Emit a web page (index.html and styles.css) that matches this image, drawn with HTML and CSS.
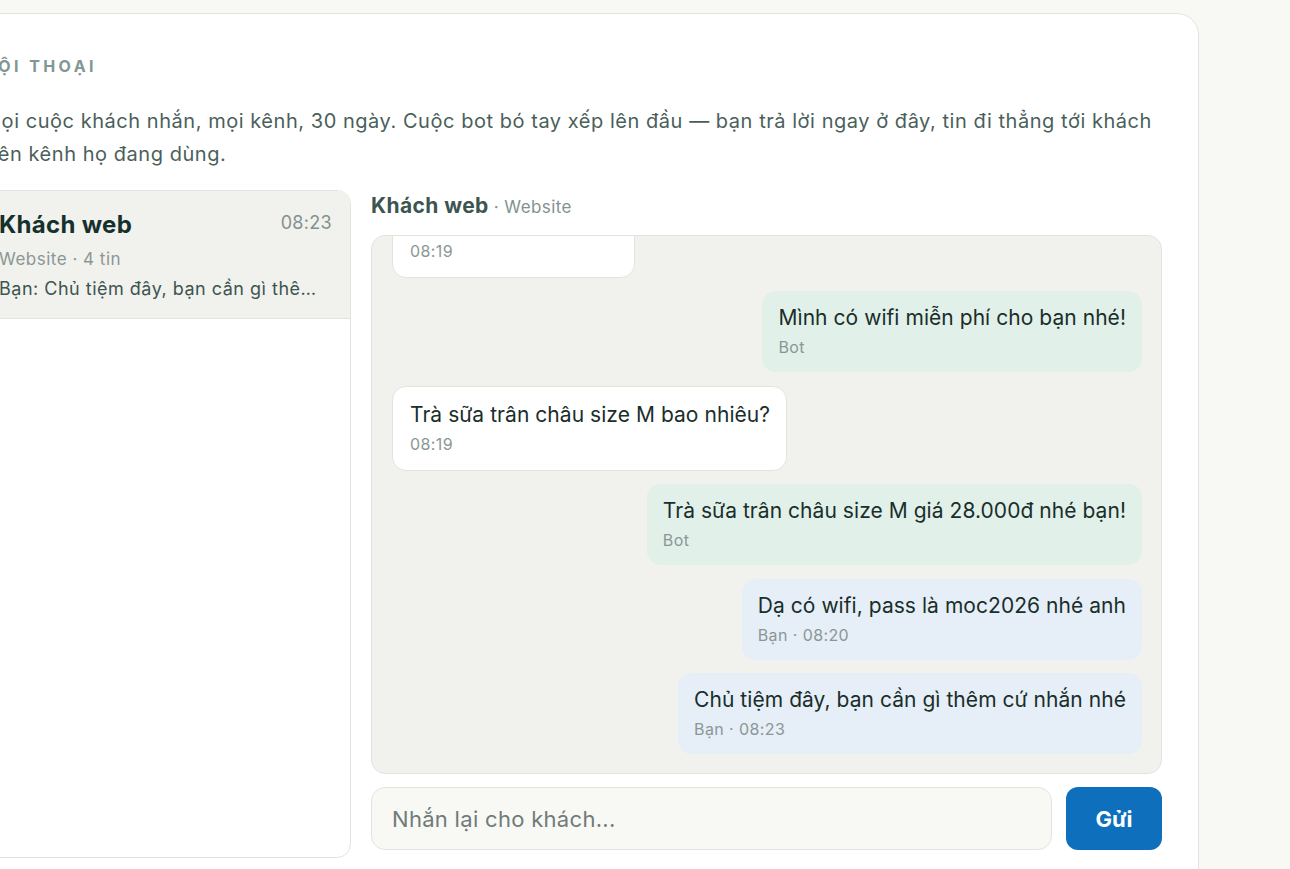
FILE: index.html
```html
<!DOCTYPE html>
<html lang="vi">
<head>
<meta charset="utf-8">
<title>Hội thoại</title>
<link rel="stylesheet" href="styles.css">
</head>
<body>
<main class="card">
  <h2 class="eyebrow">HỘI THOẠI</h2>
  <p class="intro">Mọi cuộc khách nhắn, mọi kênh, 30 ngày. Cuộc bot bó tay xếp lên đầu — bạn trả lời ngay ở đây, tin đi thẳng tới khách trên kênh họ đang dùng.</p>
  <div class="inbox">
    <aside class="thread-list">
      <div class="thread active">
        <div class="thread-top">
          <span class="thread-name">Khách web</span>
          <span class="thread-time">08:23</span>
        </div>
        <div class="thread-meta">Website · 4 tin</div>
        <div class="thread-preview">Bạn: Chủ tiệm đây, bạn cần gì thêm cứ nhắn nhé</div>
      </div>
    </aside>
    <section class="chat">
      <div class="chat-head"><span class="chat-name">Khách web</span><span class="chat-channel"> · Website</span></div>
      <div class="messages">
        <div class="msg in"><div class="msg-text">Chào quán ạ</div><div class="msg-meta">08:18</div></div>
        <div class="msg bot"><div class="msg-text">Chào bạn! Mình có thể giúp gì?</div><div class="msg-meta">Bot</div></div>
        <div class="msg in"><div class="msg-text">Bên mình có wifi chứ</div><div class="msg-meta">08:19</div></div>
        <div class="msg bot"><div class="msg-text">Mình có wifi miễn phí cho bạn nhé!</div><div class="msg-meta">Bot</div></div>
        <div class="msg in"><div class="msg-text">Trà sữa trân châu size M bao nhiêu?</div><div class="msg-meta">08:19</div></div>
        <div class="msg bot"><div class="msg-text">Trà sữa trân châu size M giá 28.000đ nhé bạn!</div><div class="msg-meta">Bot</div></div>
        <div class="msg me"><div class="msg-text">Dạ có wifi, pass là moc2026 nhé anh</div><div class="msg-meta">Bạn · 08:20</div></div>
        <div class="msg me"><div class="msg-text">Chủ tiệm đây, bạn cần gì thêm cứ nhắn nhé</div><div class="msg-meta">Bạn · 08:23</div></div>
      </div>
      <form class="composer">
        <input class="composer-input" type="text" placeholder="Nhắn lại cho khách...">
        <button class="composer-send" type="button">Gửi</button>
      </form>
    </section>
  </div>
</main>
</body>
</html>
```

FILE: styles.css
```css
* { box-sizing: border-box; }

html, body {
  margin: 0;
  padding: 0;
  background: #f8f8f5;
  overflow: hidden;
}

body {
  font-family: Inter, "Noto Sans", "Liberation Sans", sans-serif;
  color: #1a2e2a;
}

.card {
  width: 1253px;
  margin: 13px 0 0 -54px;
  background: #ffffff;
  border: 1px solid #e4e4df;
  border-radius: 22px;
  padding: 42px 36px 40px 36px;
}

.eyebrow {
  margin: 0;
  font-size: 16px;
  line-height: 20px;
  font-weight: 700;
  letter-spacing: 3.4px;
  color: #809794;
}

.intro {
  margin: 29px 0 0 0;
  font-size: 20px;
  line-height: 33px;
  letter-spacing: 0.54px;
  color: #4a5f5b;
}

.inbox {
  margin-top: 19px;
  display: grid;
  grid-template-columns: 368px 1fr;
  gap: 20px;
  align-items: start;
}

.thread-list {
  height: 668px;
  border: 1px solid #e4e4df;
  border-radius: 14px;
  overflow: hidden;
  background: #fff;
}

.thread {
  padding: 17px 18px 17px 15px;
  border-bottom: 1px solid #e4e4df;
}

.thread.active { background: #f1f1ed; }

.thread-top {
  display: flex;
  justify-content: space-between;
  align-items: flex-start;
}

.thread-name {
  font-size: 24px;
  line-height: 34px;
  font-weight: 700;
  letter-spacing: 0.3px;
  color: #16302b;
}

.thread-time {
  margin-top: 2px;
  font-size: 18px;
  line-height: 26px;
  letter-spacing: 0.3px;
  color: #83928f;
}

.thread-meta {
  margin-top: 5px;
  font-size: 17px;
  line-height: 24px;
  letter-spacing: 0.5px;
  color: #8a9795;
}

.thread-preview {
  margin-top: 6px;
  font-size: 18px;
  line-height: 24px;
  letter-spacing: 0.5px;
  color: #3d5551;
  white-space: nowrap;
  overflow: hidden;
  text-overflow: ellipsis;
}

.chat {
  display: flex;
  flex-direction: column;
}

.chat-head {
  margin-top: 3px;
  line-height: 26px;
  margin-bottom: 15px;
}

.chat-name {
  font-size: 21px;
  font-weight: 700;
  letter-spacing: 0.4px;
  color: #3d5551;
}

.chat-channel {
  font-size: 17px;
  letter-spacing: 0.4px;
  color: #83928f;
}

.messages {
  height: 539px;
  border: 1px solid #e4e4df;
  border-radius: 14px;
  background: #f1f1ed;
  padding: 0 19px 19px 20px;
  display: flex;
  flex-direction: column;
  justify-content: flex-end;
  gap: 13.5px;
  overflow: hidden;
}

.msg {
  flex: none;
  max-width: 80%;
  border-radius: 14px;
  padding: 13px 16px 14px 16px;
}

.msg.in {
  align-self: flex-start;
  background: #ffffff;
  border: 1px solid #e4e4df;
  padding: 14px 16px 15px 17px;
}

.msg.bot {
  align-self: flex-end;
  background: #e2f0ea;
}

.msg.me {
  align-self: flex-end;
  background: #e6eef8;
}

.msg-text {
  font-size: 21px;
  line-height: 28px;
  letter-spacing: 0.05px;
  color: #1a2e2a;
}

.msg-meta {
  margin-top: 4px;
  font-size: 16px;
  line-height: 22px;
  letter-spacing: 0.4px;
  color: #8a9795;
}

.composer {
  margin: 13px 0 0 0;
  display: flex;
  gap: 14px;
}

.composer-input {
  flex: 1;
  height: 63px;
  border: 1px solid #e4e4df;
  border-radius: 14px;
  background: #f8f8f5;
  padding: 0 20px;
  font-family: inherit;
  font-size: 22px;
  letter-spacing: 0.3px;
  color: #1a2e2a;
  outline: none;
}

.composer-input::placeholder { color: #707b79; }

.composer-send {
  width: 96px;
  height: 63px;
  border: 0;
  border-radius: 12px;
  background: #0e6fbd;
  color: #ffffff;
  font-family: inherit;
  font-size: 22px;
  font-weight: 700;
}
```
